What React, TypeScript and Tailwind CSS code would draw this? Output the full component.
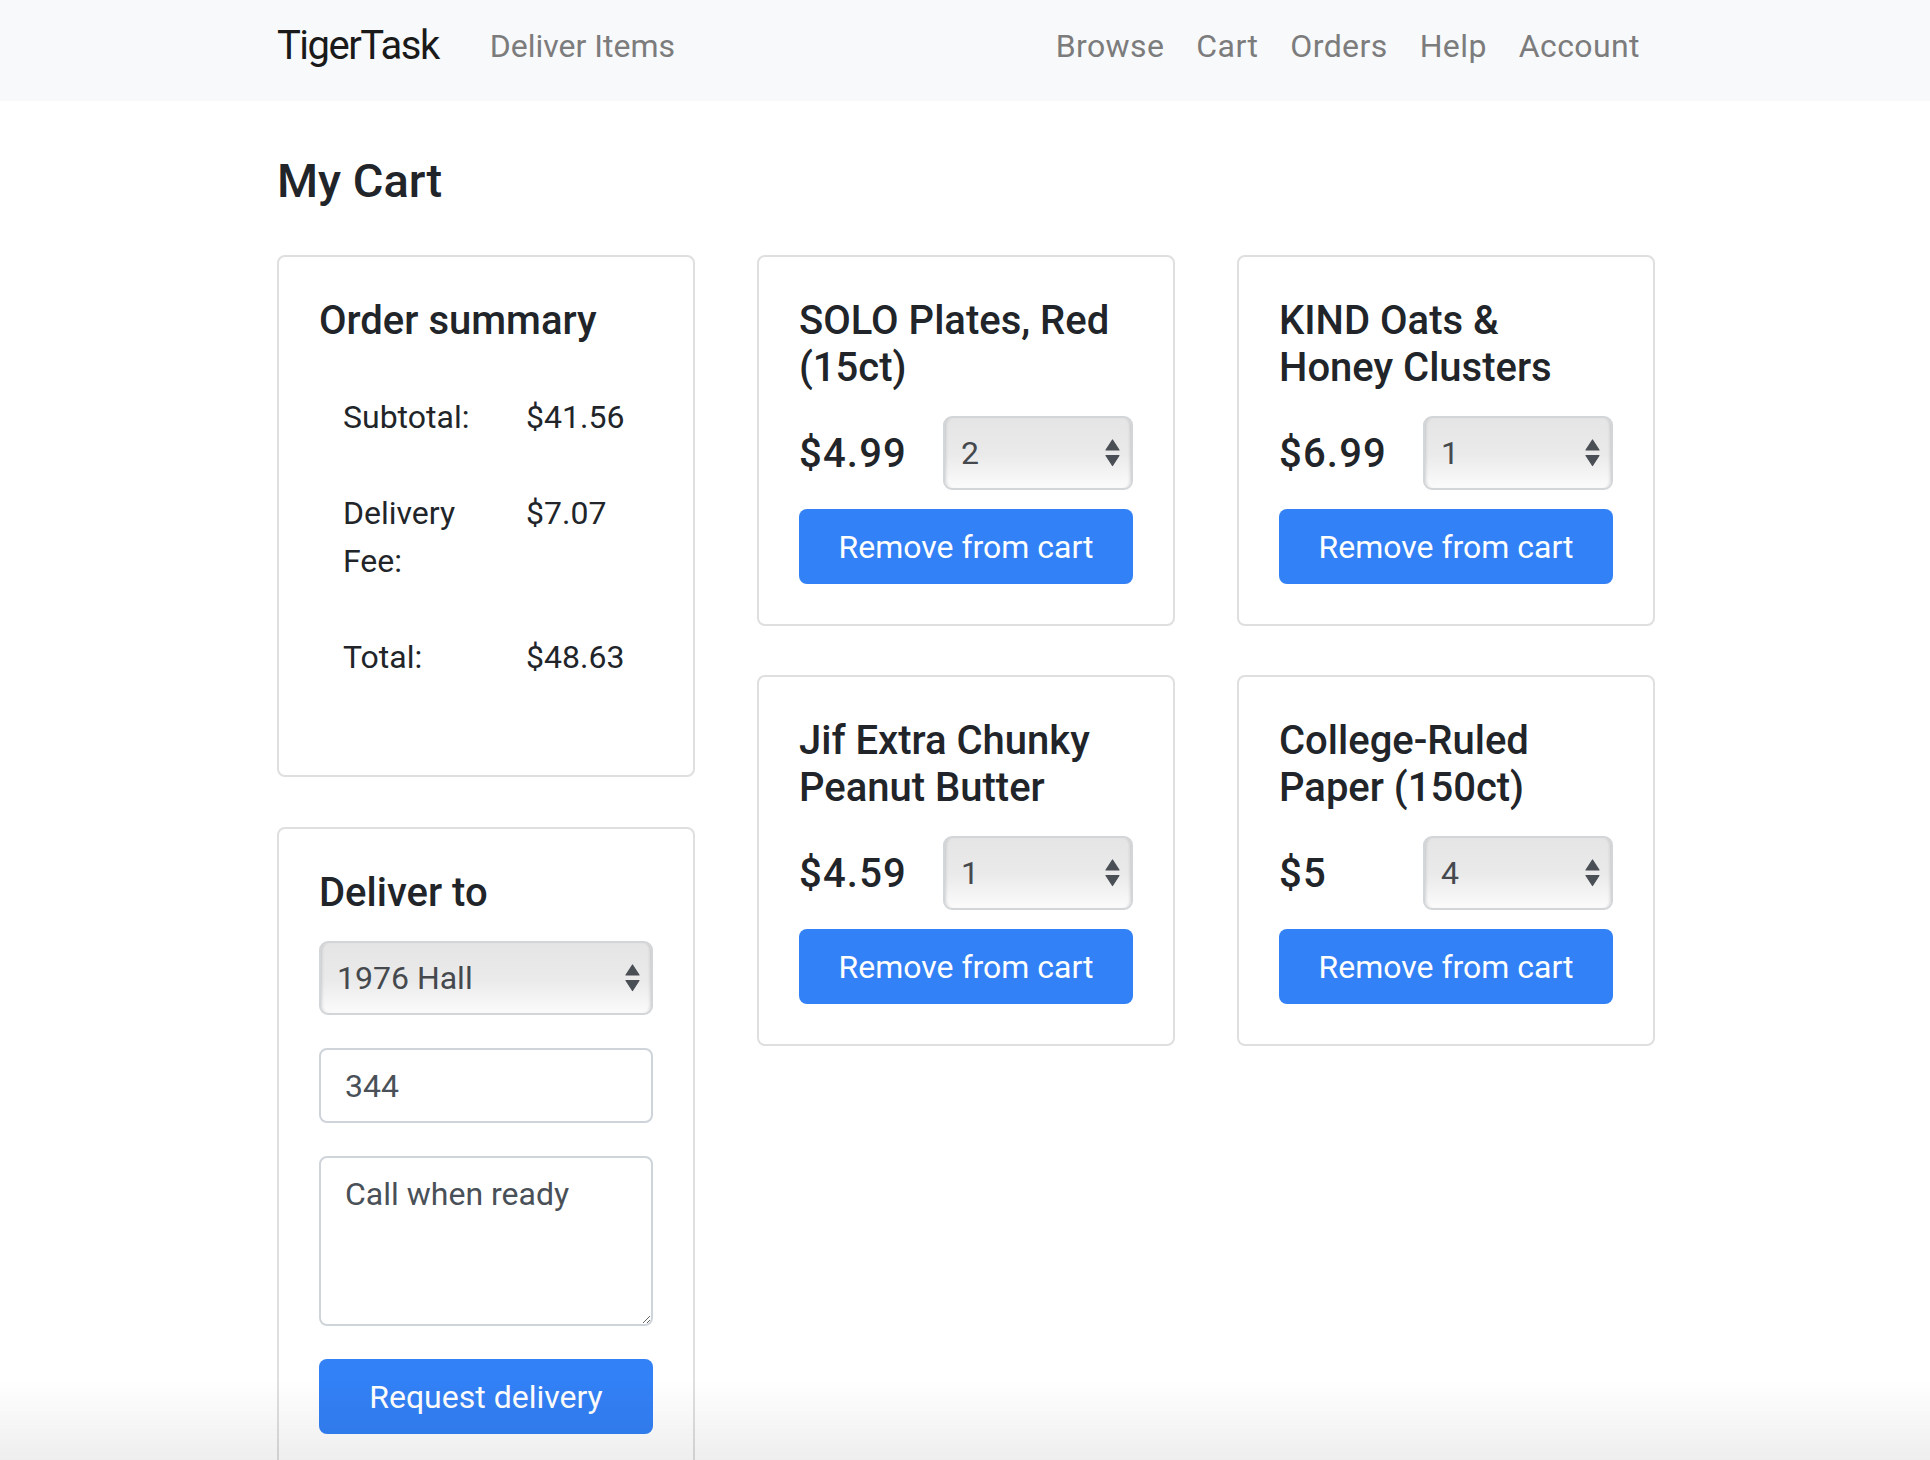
import React from "react";

function SelectArrows() {
  return (
    <svg width="15" height="28" viewBox="0 0 15 28" className="shrink-0">
      <path d="M7.5 1 L14 11 L1 11 Z" fill="#4a4f55" stroke="#4a4f55" strokeWidth="1.2" strokeLinejoin="round" />
      <path d="M1 16.5 L14 16.5 L7.5 26.5 Z" fill="#4a4f55" stroke="#4a4f55" strokeWidth="1.2" strokeLinejoin="round" />
    </svg>
  );
}

function FakeSelect({ value, wide }: { value: string; wide?: boolean }) {
  return (
    <div
      className={`flex h-[74px] items-center justify-between rounded-[9px] border-2 border-[#d3d6d9] bg-[linear-gradient(180deg,#e5e5e5_0%,#eaeaea_52%,#fbfbfb_100%)] pl-[16px] pr-[11px] text-[32px] leading-[48px] text-[#45494e] shadow-[inset_3px_0_3px_-2px_rgba(0,0,0,0.14),inset_-3px_0_3px_-2px_rgba(0,0,0,0.14)] ${
        wide ? "w-full" : "w-[190px]"
      }`}
    >
      <span>{value}</span>
      <SelectArrows />
    </div>
  );
}

function BlueButton({ label }: { label: string }) {
  return (
    <button
      type="button"
      className="h-[75px] w-full rounded-[8px] bg-[#3381f6] text-[32px] leading-[48px] text-white"
    >
      {label}
    </button>
  );
}

function ProductCard({ title, price, qty }: { title: string; price: string; qty: string }) {
  return (
    <div className="rounded-[8px] border-2 border-[#dfdfdf] p-[40px]">
      <h5 className="mb-[25px] text-[40px] font-medium leading-[47px] text-[#212529]">{title}</h5>
      <div className="flex h-[74px] items-center justify-between">
        <span className="text-[40px] font-medium leading-[47px] tracking-[1.2px] text-[#212529]">{price}</span>
        <FakeSelect value={qty} />
      </div>
      <div className="mt-[19px]">
        <BlueButton label="Remove from cart" />
      </div>
    </div>
  );
}

export default function App() {
  const rows: [string, string][] = [
    ["Subtotal:", "$41.56"],
    ["Delivery Fee:", "$7.07"],
    ["Total:", "$48.63"],
  ];
  return (
    <div className="min-h-[1460px] bg-white font-['Roboto','Liberation_Sans',sans-serif] text-[#212529]">
      <nav className="h-[101px] bg-[#f8f9fa]">
        <div className="ml-[277px] flex w-[1379px] items-start">
          <span className="mt-[26px] mr-[35px] text-[40px] leading-[40px] tracking-[-1.5px] text-[#1a1a1a]">
            TigerTask
          </span>
          <a className="mt-[22px] px-[16px] text-[32px] leading-[48px] text-[#7c7c7d]">Deliver Items</a>
          <div className="ml-auto flex">
            {["Browse", "Cart", "Orders", "Help", "Account"].map((l) => (
              <a
                key={l}
                className="mt-[22px] px-[16px] text-[32px] leading-[48px] tracking-[0.4px] text-[#7c7c7d]"
              >
                {l}
              </a>
            ))}
          </div>
        </div>
      </nav>

      <main className="ml-[277px] w-[1379px]">
        <h4 className="mt-[52px] mb-[46px] text-[47px] font-medium leading-[56px] text-[#212529]">My Cart</h4>

        <div className="flex items-start gap-x-[62px]">
          <div className="flex w-[418px] flex-col gap-y-[50px]">
            <div className="rounded-[8px] border-2 border-[#dfdfdf] p-[40px]">
              <h5 className="mb-[25px] text-[40px] font-medium leading-[47px]">Order summary</h5>
              <table className="mb-[30px] w-full text-[32px] leading-[48px]">
                <tbody>
                  {rows.map(([k, v]) => (
                    <tr key={k}>
                      <td className="w-[183px] p-[24px] align-top">{k}</td>
                      <td className="p-[24px] align-top">{v}</td>
                    </tr>
                  ))}
                </tbody>
              </table>
            </div>

            <div className="rounded-[8px] border-2 border-[#dfdfdf] p-[40px]">
              <h5 className="mb-[25px] text-[40px] font-medium leading-[47px]">Deliver to</h5>
              <div className="flex flex-col gap-y-[33px]">
                <FakeSelect value="1976 Hall" wide />
                <input
                  readOnly
                  value="344"
                  className="h-[75px] w-full rounded-[8px] border-2 border-[#ced4da] bg-white px-[24px] text-[32px] leading-[48px] text-[#495057] outline-none"
                />
                <textarea
                  readOnly
                  value="Call when ready"
                  className="block h-[170px] w-full rounded-[8px] border-2 border-[#ced4da] bg-white px-[24px] py-[12px] text-[32px] leading-[48px] text-[#495057] outline-none"
                />
                <BlueButton label="Request delivery" />
              </div>
            </div>
          </div>

          <div className="grid grid-cols-[418px_418px] gap-x-[62px] gap-y-[49px]">
            <ProductCard title="SOLO Plates, Red (15ct)" price="$4.99" qty="2" />
            <ProductCard title="KIND Oats & Honey Clusters" price="$6.99" qty="1" />
            <ProductCard title="Jif Extra Chunky Peanut Butter" price="$4.59" qty="1" />
            <ProductCard title="College-Ruled Paper (150ct)" price="$5" qty="4" />
          </div>
        </div>
      </main>

      <div className="pointer-events-none fixed inset-x-0 bottom-0 h-[80px] bg-[linear-gradient(180deg,rgba(0,0,0,0)_0%,rgba(0,0,0,0.065)_100%)]" />
    </div>
  );
}
